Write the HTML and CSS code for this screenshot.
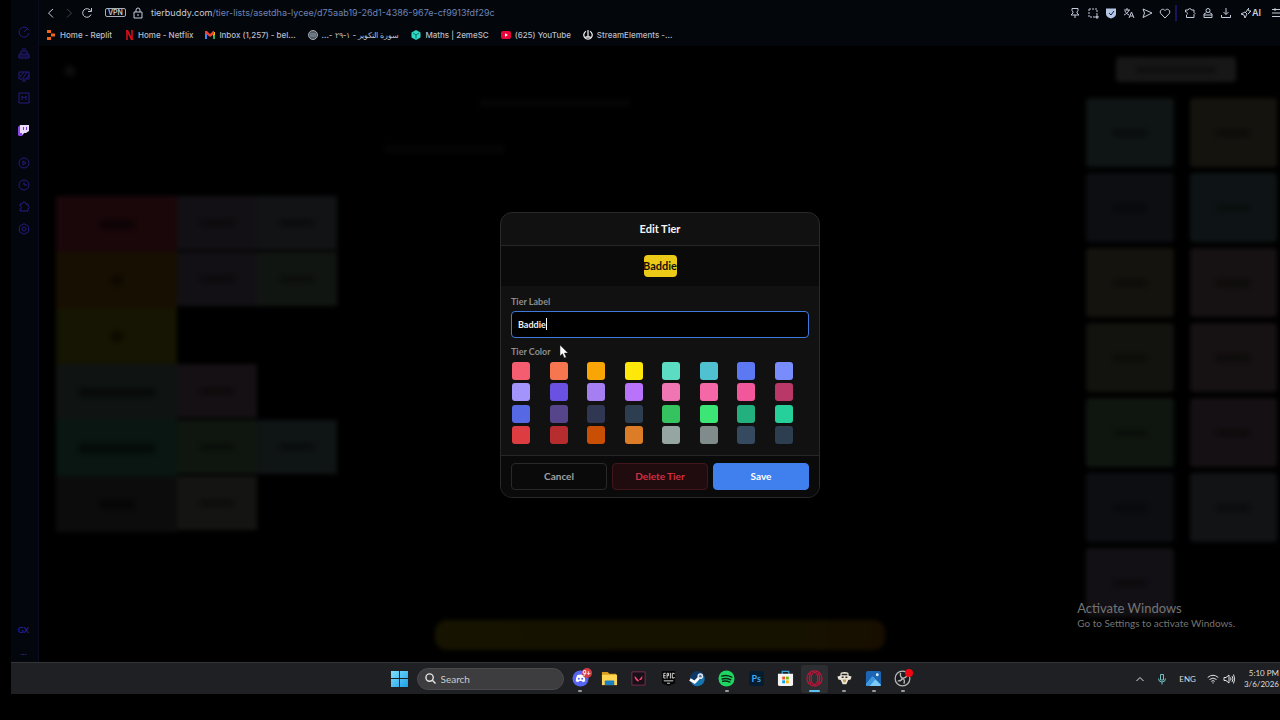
FILE: index.html
```html
<!DOCTYPE html>
<html lang="en">
  <head>
    <meta charset="UTF-8" />
    <meta name="viewport" content="width=device-width, initial-scale=1.0" />
    <title>Edit Tier</title>
    <link rel="stylesheet" href="styles.css">
  </head>
  <body>
    <div class="browser">
      <nav class="sidebar" aria-label="Sidebar">
        <svg class="icon" viewBox="0 0 12 12"><path d="M10.6 4A5 5 0 1 0 11 7M6 6l4-4" /></svg>
        <svg class="icon" viewBox="0 0 12 12"><path d="M1 10V6h10v4zM3 6V3h6v3M4 1h4M1 8h10M4 10v1M8 10v1" /></svg>
        <svg class="icon" viewBox="0 0 12 12"><path d="M1 2h10v7H1zM4 11h4M2 7l4-5M5 8l4-6M8 9l3-4" /></svg>
        <svg class="icon" viewBox="0 0 12 12"><path d="M1 1h10v10H1zM4 8V4l2 2 2-2v4" /></svg>
        <svg class="icon twitch" viewBox="0 0 12 12"><path class="t-back" d="M0 3l2-2v8l-1 3-1-1z" /><path class="t-back" d="M1 8h6l-3 4H1z" /><path class="t-face" d="M2 1h9v6L8 9H6l-2 2V9H2z" /><path class="t-eye" d="M5 3h1v3H5zM8 3h1v3H8z" /></svg>
        <svg class="icon" viewBox="0 0 12 12"><circle cx="6" cy="6" r="5" /><path d="M5 4l3 2-3 2z" /></svg>
        <svg class="icon" viewBox="0 0 12 12"><circle cx="6" cy="6" r="5" /><path d="M6 3v3h3" /></svg>
        <svg class="icon" viewBox="0 0 12 12"><path d="M2 3h2a2 2 0 0 1 4 0h2v2l1.500 1.500L10 8v2H2V8a1.500 1.500 0 0 0 0-3z" /></svg>
        <svg class="icon" viewBox="0 0 12 12"><path d="M6 .7l4.600 2.600v5.400L6 11.300 1.400 8.700V3.300z" /><circle cx="6" cy="6" r="2" /></svg>
        <span class="gx">GX</span>
        <span class="more">...</span>
      </nav>

      <div class="window">
        <header class="chrome">
          <div class="address-bar">
            <button class="tool" aria-label="Back"><svg viewBox="0 0 12 12"><path d="M8 2L3.500 6 8 10.500" /></svg></button>
            <button class="tool off" aria-label="Forward"><svg viewBox="0 0 12 12"><path d="M4 2l4.500 4L4 10.500" /></svg></button>
            <button class="tool" aria-label="Reload"><svg viewBox="0 0 12 12"><path d="M10 7.500A4.300 4.300 0 1 1 9.500 3.500M10.500 1v3.500H7" /></svg></button>
            <span class="vpn">VPN</span>
            <svg class="lock" viewBox="0 0 12 12"><path d="M2 5h8v6H2zM4 5V3a2 2 0 0 1 4 0v2M6 7v2" /></svg>
            <a class="url" href="#"><b>tierbuddy.com</b>/tier-lists/asetdha-lycee/d75aab19-26d1-4386-967e-cf9913fdf29c</a>
            <div class="tools">
              <button class="tool" aria-label="Pin"><svg viewBox="0 0 12 12"><path d="M3 1.500h6v2L8 5v1l2 2H2l2-2V5L3 3.500zM6 8v3" /></svg></button>
              <button class="tool" aria-label="Snapshot"><svg viewBox="0 0 12 12"><path stroke-dasharray="2 1" d="M2 2h8v8H2z" /><path d="M10 8v4M8 10h4" /></svg></button>
              <button class="tool" aria-label="Shield"><svg viewBox="0 0 12 12"><path class="shield" d="M1 1.500h10V7c0 2-2 3.500-5 4.500C3 10.500 1 9 1 7z" /><path class="tick" d="M4 6l2 2 3-4" /></svg></button>
              <button class="tool" aria-label="Translate"><svg viewBox="0 0 12 12"><path d="M1 3h6M4 1v2M6 3C5 6 3 7 1 8M2 4c1 2 2 3 4 4M6 11l2.500-6 2.500 6M7 9h3" /></svg></button>
              <button class="tool" aria-label="Send"><svg viewBox="0 0 12 12"><path d="M2 2l9 4-9 4.500L3.500 6z" /></svg></button>
              <button class="tool" aria-label="Favourite"><svg viewBox="0 0 12 12"><path d="M6 11L1.700 6.500C-.3 3.500 4 .5 6 3.500 8 .5 12.300 3.500 10.300 6.500z" /></svg></button>
              <i class="divider"></i>
              <button class="tool" aria-label="Extensions"><svg viewBox="0 0 12 12"><path d="M1.500 3H4a1.800 1.800 0 0 1 3.500 0H10v2.500l1 1-1 1V10.500H2.500V8a1.700 1.700 0 0 0 0-3H1.500z" /></svg></button>
              <button class="tool" aria-label="Profile"><svg viewBox="0 0 12 12"><circle cx="6" cy="3.500" r="2" /><path d="M4.500 5.500L2 7v3.500h8V7L7.500 5.500M2 8h8" /></svg></button>
              <button class="tool" aria-label="Downloads"><svg viewBox="0 0 12 12"><path d="M6 1v6.500M3.500 5L6 7.500 8.500 5M1.500 8v2.500h9V8" /></svg></button>
              <button class="tool ai" aria-label="AI"><svg viewBox="0 0 12 12"><path d="M1 7l4-2 2 2-2 4-1-3zM6 5l2-3 1 2 2 0-3 3M8 1l1 1" /></svg>AI</button>
              <button class="tool" aria-label="Menu"><svg viewBox="0 0 12 12"><path d="M1 2.500h11M1 6h11M1 9.500h11M4 1v3" /></svg></button>
            </div>
          </div>
          <div class="bookmarks">
            <a href="#"><svg class="fav" viewBox="0 0 10 10"><path fill="#f2641c" d="M1 0h4v3H1zM5 3.500h4v3H5zM1 7h4v3H1z" /></svg>Home - Replit</a>
            <a href="#"><svg class="fav" viewBox="0 0 10 10"><path fill="#a80c16" d="M2 0h2v10H2zM7 0h2v10H7z" /><path fill="#e50914" d="M2 0h2l5 10H7z" /></svg>Home - Netflix</a>
            <a href="#"><svg class="fav" viewBox="0 0 10 10"><path fill="#4285f4" d="M0 2h2v7H0z" /><path fill="#34a853" d="M8 4h2v5H8z" /><path fill="#fbbc04" d="M8 2h2v3L8 6z" /><path fill="#ea4335" d="M0 1h2l3 3 3-3h1v3L5 7 0 3z" /></svg>Inbox (1,257) - bel...</a>
            <a href="#"><svg class="fav" viewBox="0 0 10 10"><circle cx="5" cy="5" r="4.500" fill="#4c5964" stroke="#a4a9ad" /><path d="M2 4h6M2 6h6" stroke="#8b98a5" /></svg><span dir="rtl">سورة التكوير - ١-٢٩ -...</span></a>
            <a href="#"><svg class="fav" viewBox="0 0 10 10"><path fill="#2fd9c4" d="M5 0l4.500 2.500v5L5 10 .5 7.500v-5z" /><path fill="none" stroke="#0c6d68" d="M2 3l3 2 3-2M5 5v3.500" /></svg>Maths | 2emeSC</a>
            <a href="#"><svg class="fav" viewBox="0 0 10 10"><rect y="1" width="10" height="8" rx="2" fill="#e6063a" /><path fill="#fff" d="M4 3.300L7 5 4 6.700z" /></svg>(625) YouTube</a>
            <a href="#"><svg class="fav" viewBox="0 0 10 10"><path fill="none" stroke="#e8e8e8" stroke-width="1.300" d="M3 1.200a4.200 4.200 0 1 0 4 0M5 0v7M2.500 7h5" /></svg>StreamElements -...</a>
          </div>
        </header>

        <div class="page">
          <div class="backdrop" aria-hidden="true">
            <div class="board">
              <div class="avatar"></div>
              <div class="smudge title"></div>
              <div class="smudge subtitle"></div>
              <div class="tiers">
                <div class="tier"><div class="label red"><i></i></div><div class="card plum"><i></i></div><div class="card slate"><i></i></div></div>
                <div class="tier"><div class="label orange"><i class="dot"></i></div><div class="card plum"><i></i></div><div class="card moss"><i></i></div></div>
                <div class="tier"><div class="label yellow"><i class="dot"></i></div></div>
                <div class="tier"><div class="label sage"><i class="wide"></i></div><div class="card rose"><i></i></div></div>
                <div class="tier"><div class="label green"><i class="wide"></i></div><div class="card grass"><i></i></div><div class="card teal"><i></i></div></div>
                <div class="tier"><div class="label grey"><i></i></div><div class="card sand"><i></i></div></div>
              </div>
              <div class="bar"></div>
            </div>
            <div class="pool">
              <div class="pool-btn"><i></i></div>
              <div class="pool-grid">
                <div class="card teal"><i></i></div><div class="card gold"><i></i></div>
                <div class="card navy"><i></i></div><div class="card cyan"><i></i></div>
                <div class="card gold"><i></i></div><div class="card blush"><i></i></div>
                <div class="card olive"><i></i></div><div class="card blush"><i></i></div>
                <div class="card grass"><i></i></div><div class="card rose"><i></i></div>
                <div class="card navy"><i></i></div><div class="card slate"><i></i></div>
                <div class="card plum"><i></i></div>
              </div>
            </div>
          </div>

          <div class="overlay">
            <form class="modal" role="dialog" aria-labelledby="modal-title">
              <h2 id="modal-title">Edit Tier</h2>
              <div class="preview"><span>Baddie</span></div>
              <div class="fields">
                <label for="tier-label">Tier Label</label>
                <div class="text-field">
                  <input type="text" id="tier-label" value="Baddie" />
                  <i class="caret"></i>
                </div>
                <p id="color-label">Tier Color</p>
                <div class="swatches" role="radiogroup" aria-labelledby="color-label"></div>
              </div>
              <div class="actions">
                <button type="button" class="cancel">Cancel</button>
                <button type="button" class="delete">Delete Tier</button>
                <button type="button" class="save">Save</button>
              </div>
              <svg class="cursor" viewBox="0 0 10 14"><path fill="#fff" stroke="#222" stroke-width=".5" d="M1 0v11l2.500-2.300L5.300 13l1.900-.8-1.800-4.100H9z" /></svg>
            </form>
          </div>

          <div class="activate">
            <strong>Activate Windows</strong>
            <span>Go to Settings to activate Windows.</span>
          </div>
        </div>
      </div>
    </div>

    <footer class="taskbar">
      <div class="launcher">
        <svg class="start" viewBox="0 0 17 17"><defs><linearGradient id="win" x2="1" y2="1"><stop stop-color="#7fe0fb" /><stop offset="1" stop-color="#1b9fe8" /></linearGradient></defs><path fill="url(#win)" d="M0 1h8v7H0zM9 1h8v7H9zM0 9h8v8H0zM9 9h8v8H9z" /></svg>
        <label class="search">
          <svg viewBox="0 0 12 12"><circle cx="5" cy="5" r="4" /><path d="M8 8l3.500 3.500" /></svg>
          <input type="text" placeholder="Search" aria-label="Search" />
        </label>
        <div class="apps">
          <span class="app open"><svg viewBox="0 0 18 18"><circle cx="9" cy="9" r="8.500" fill="#5865f2" /><path fill="#fff" d="M5.500 5.500Q9 4 12.500 5.500 14.500 9 14 12l-2.500 1-1-1.300h-3l-1 1.300L4 12q-.5-3 1.500-6.500z" /><circle cx="7.200" cy="9.300" r="1.100" fill="#5865f2" /><circle cx="10.800" cy="9.300" r="1.100" fill="#5865f2" /></svg><b class="badge">9+</b></span>
          <span class="app"><svg viewBox="0 0 18 18"><path fill="#d89b1c" d="M1 2h6l2 2h7v4H1z" /><path fill="#ffd553" d="M1 5h16v11H1z" /><path fill="#1b7fc4" d="M4 16v-4q0-1 1-1h8q1 0 1 1v4z" /></svg></span>
          <span class="app"><svg viewBox="0 0 18 18"><path fill="#171019" stroke="#7c2f4b" d="M2 2h14v14H2z" /><path fill="#f0476a" d="M5 6l5 6H7.500L5 9zM13 6v3l-1.300 1.500H9.500z" /></svg></span>
          <span class="app"><svg viewBox="0 0 18 18"><path fill="#060606" d="M2 1h14v13l-7 3-7-3z" /><path fill="none" stroke="#ddd" d="M6 3.500H4v5h2M4 6h2M7.500 9V3.500h1.500V6H7.500M11 3v6M15 4.500v-1h-2v5h2v-1M4 11.500h10M7.500 14h3" /></svg></span>
          <span class="app"><svg viewBox="0 0 18 18"><circle cx="9" cy="9" r="8" fill="#103866" /><path fill="#1675ad" d="M2 13q7 1 14-7 2 9-6 11-5 1-8-4z" /><path fill="none" stroke="#fff" stroke-width="3" d="M1 10l5 3 6-6" /><circle cx="12" cy="6.500" r="3" fill="#dbe4ee" /><circle cx="12" cy="6.500" r="1.300" fill="#497093" /></svg></span>
          <span class="app open"><svg viewBox="0 0 18 18"><circle cx="9" cy="9" r="8.500" fill="#1ed760" /><path fill="none" stroke="#0c2615" stroke-width="1.600" stroke-linecap="round" d="M4 6.500q5.500-1.500 10.500 1M4.500 9.500q4.500-1.200 9 .8M5 12q4-.8 7.500.8" /></svg></span>
          <span class="app ps">Ps</span>
          <span class="app"><svg viewBox="0 0 18 18"><path fill="none" stroke="#36a3dc" stroke-width="1.300" d="M5.500 5V1.500h7V5" /><path fill="#f3f3f3" d="M1 4h16v11q0 2-2 2H3q-2 0-2-2z" /><path fill="#f25022" d="M5.500 7h3v3h-3z" /><path fill="#7fba00" d="M9.500 7h3v3h-3z" /><path fill="#00a4ef" d="M5.500 11h3v3h-3z" /><path fill="#ffb900" d="M9.500 11h3v3h-3z" /></svg></span>
          <span class="app open current"><svg viewBox="0 0 18 18"><g fill="none" stroke="#c5133a" stroke-width="1.300"><circle cx="9" cy="9" r="8" /><ellipse cx="9" cy="9" rx="3.500" ry="6.500" /><path d="M5 3.500q-3 5.500 0 11M13 3.500q3 5.500 0 11" /></g></svg></span>
          <span class="app open"><svg viewBox="0 0 18 18"><path fill="#e9e4d8" d="M5 3q4-2 8 0l.5 3 3 1-1 3-2.500.5-2 4.500H7l-2-4.500L2.500 10l-1-3 3-1z" /><path fill="#28231f" d="M6 4h6v1.500H6zM6 7h2v1.500H6zM10 7h2v1.500h-2z" /><path fill="#c49a55" d="M7 10h4l-1 3H8z" /></svg></span>
          <span class="app open"><svg viewBox="0 0 18 18"><rect x="1" y="1" width="16" height="16" rx="2" fill="#1c65b4" /><path fill="#7dccf7" d="M1 15l7-8 9 9-1 1H2z" /><path fill="#3c99df" d="M1 15l7-8 3 3-6 7H2z" /><circle cx="13" cy="5" r="1.500" fill="#d8f1ff" /></svg></span>
          <span class="app open"><svg viewBox="0 0 18 18"><circle cx="9" cy="9" r="7.800" fill="#1b1c1f" stroke="#b8b8b8" stroke-width="1.300" /><path fill="none" stroke="#b8b8b8" stroke-width="1.400" d="M7 3q-1 4 2 5.500Q12 9 14 6M9 8.500Q8 12 4 11.500M9 8.500q3 2 1.500 6" /></svg><i class="rec"></i></span>
        </div>
      </div>
      <div class="tray">
        <svg viewBox="0 0 12 12"><path d="M2.500 8L6 4.500 9.500 8" /></svg>
        <svg class="mic" viewBox="0 0 12 12"><path d="M4.500 1.500h3V7h-3zM2.500 5.500Q2.500 9 6 9t3.500-3.500M6 9v2.500" /></svg>
        <span class="lang">ENG</span>
        <svg viewBox="0 0 12 12"><path d="M.7 4.500q5.300-4.500 10.600 0M2.500 6.500Q6 3.700 9.500 6.500M4.300 8.300Q6 7 7.700 8.300M6 9.300v1.200" /></svg>
        <svg viewBox="0 0 12 12"><path d="M1 4.500h2L6 2v8L3 7.500H1zM7.500 4.500q1 1.500 0 3M9 3q2 3 0 6M10.500 1.500q2.500 4.500 0 9" /></svg>
        <div class="clock">5:10 PM<br />3/6/2026</div>
      </div>
    </footer>

    <script>
      var palette = [
        "#f35d6f", "#f67650", "#f9a506", "#fde80a", "#5bdcc3", "#4fc1d1", "#5c78f3", "#788cfb",
        "#a394fb", "#6b51e2", "#a57ff2", "#b973fa", "#ef76b3", "#f567a6", "#f2579b", "#b93868",
        "#5668e3", "#57458c", "#2f3752", "#2d3e50", "#34c35f", "#3be677", "#22b07e", "#26d09b",
        "#dd3c40", "#b72c2f", "#c84f04", "#dd7c26", "#95a5a2", "#7f8c8b", "#35495f", "#2c3e50",
      ];
      var swatches = document.getElementsByClassName("swatches")[0];

      for (var i = 0; i < palette.length; i++) {
        var radio = document.createElement("input");
        radio.type = "radio";
        radio.name = "tier-color";
        radio.value = palette[i];
        radio.setAttribute("aria-label", palette[i]);
        radio.style.backgroundColor = palette[i];
        swatches.appendChild(radio);
      }
    </script>
  </body>
</html>
```

FILE: styles.css
```css
* {
  box-sizing: border-box;
}
body {
  display: flex;
  flex-direction: column;
  height: 100vh;
  margin: 0;
  padding: 0 0 26px 11px;
  overflow: hidden;
  background-color: #000;
  color: #ddd;
  font-family: Lato, "Open Sans", sans-serif;
}
button,
input {
  font-family: inherit;
}
svg {
  flex: none;
}
.browser {
  display: flex;
  flex: 1;
  min-height: 0;
}

/* sidebar */
.sidebar {
  display: flex;
  flex-direction: column;
  align-items: center;
  gap: 10px;
  width: 28px;
  padding: 26px 2px 4px 0;
  background-color: #03060c;
  border-right: 1px solid #0b0c22;
  color: #3a26b0;
  font-size: 8px;
  line-height: 12px;
}
.sidebar .icon {
  width: 12px;
  height: 12px;
  fill: none;
  stroke: #281a80;
}
.sidebar .twitch {
  margin: 10px 0 11px;
  stroke: none;
}
.t-back {
  fill: #8b45e8;
}
.t-face {
  fill: #eadcff;
}
.t-eye {
  fill: #7a35dd;
}
.gx {
  margin-top: auto;
}
.more {
  font-weight: 700;
}

/* toolbar and bookmarks */
.window {
  display: flex;
  flex: 1;
  flex-direction: column;
  min-width: 0;
}
.chrome {
  height: 46px;
  background-color: #03070c;
  font-family: Inter, sans-serif;
  white-space: nowrap;
}
.address-bar {
  display: flex;
  align-items: center;
  height: 25px;
  padding-left: 6px;
  gap: 6px;
}
.tool {
  display: flex;
  flex: none;
  align-items: center;
  padding: 0;
  border: 0;
  background: none;
  color: #c4cbd8;
  font-size: 9px;
  font-weight: 600;
}
.tool svg,
.lock {
  width: 12px;
  height: 12px;
  fill: none;
  stroke: #c4cbd8;
}
.tool.off {
  opacity: 0.3;
}
.tool .shield {
  fill: #b3c6e6;
  stroke: none;
}
.tool .tick {
  stroke: #10203a;
}
.vpn {
  margin: 0 0 0 6px;
  padding: 0 2px;
  border: 1px solid #a9b0bc;
  border-radius: 2px;
  color: #c4cbd8;
  font-size: 7px;
  font-weight: 600;
  line-height: 7px;
}
.url {
  margin-left: 1px;
  color: #6d83b4;
  font-size: 9px;
  text-decoration: none;
}
.url b {
  color: #c4cbd8;
  font-weight: 400;
}
.tools {
  display: flex;
  align-items: center;
  gap: 6px;
  margin-left: auto;
  margin-right: -3px;
}
.divider {
  width: 2px;
  height: 16px;
  margin: 0 1px 0 -2px;
  background-color: #1d125c;
}
.ai {
  margin: 0 4px 0 2px;
}
.bookmarks {
  display: flex;
  gap: 12px;
  padding-left: 7px;
}
.bookmarks a {
  display: flex;
  align-items: center;
  gap: 4px;
  height: 19px;
  color: #b9bdc6;
  font-size: 8px;
  font-weight: 500;
  text-decoration: none;
}
.fav {
  width: 10px;
  height: 10px;
}

/* blurred page behind the dialog */
.page {
  position: relative;
  flex: 1;
  min-height: 0;
  overflow: hidden;
}
.backdrop {
  display: grid;
  grid-template-columns: 1fr 210px;
  height: 100%;
  filter: blur(2px);
}
.backdrop i {
  width: 34px;
  height: 6px;
  background-color: #000;
  opacity: 0.4;
  filter: blur(2px);
}
.backdrop .label i {
  height: 9px;
  opacity: 0.5;
}
.backdrop i.dot {
  width: 10px;
}
.backdrop i.wide {
  width: 76px;
}
.board {
  display: flex;
  flex-direction: column;
  padding: 19px 16px 12px 17px;
}
.avatar {
  width: 12px;
  height: 12px;
  margin-left: 8px;
  border-radius: 50%;
  background-color: #0d0b0b;
}
.smudge {
  align-self: center;
  height: 8px;
  background-color: #050505;
}
.title {
  width: 150px;
  margin-top: 22px;
}
.subtitle {
  width: 120px;
  margin: 38px 220px 43px 0;
}
.tier {
  display: flex;
  height: 56px;
}
.label,
.card,
.pool-btn {
  display: flex;
  align-items: center;
  justify-content: center;
}
.label {
  width: 121px;
}
.card {
  width: 80px;
  height: 54px;
}
.red { background-color: #1a070a; }
.orange { background-color: #170f02; }
.yellow { background-color: #161402; }
.sage { background-color: #0f1412; }
.green { background-color: #091611; }
.grey { background-color: #0c0c0c; }
.plum { background-color: #121014; }
.slate { background-color: #111314; }
.moss { background-color: #111511; }
.rose { background-color: #151013; }
.grass { background-color: #0f160f; }
.teal { background-color: #0f1414; }
.sand { background-color: #141412; }
.gold { background-color: #15130e; }
.navy { background-color: #0c0e12; }
.cyan { background-color: #0e1415; }
.blush { background-color: #161112; }
.olive { background-color: #12130e; }
.bar {
  align-self: center;
  width: 450px;
  height: 30px;
  margin-top: auto;
  margin-left: 210px;
  border-radius: 12px;
  background: linear-gradient(90deg, #161300, #161200 80%, #180e00);
}
.pool {
  padding: 11px 3px 0 16px;
}
.pool-btn {
  width: 120px;
  height: 25px;
  margin-left: 30px;
  border-radius: 4px;
  background-color: #171717;
}
.pool-btn i {
  width: 80px;
}
.pool-grid {
  display: grid;
  grid-template-columns: 1fr 1fr;
  gap: 6px 16px;
  margin-top: 16px;
}
.pool-grid .card {
  width: auto;
  height: 69px;
  border-radius: 4px;
}

/* dialog */
.overlay {
  position: absolute;
  inset: 0;
  display: flex;
  align-items: center;
  justify-content: center;
  padding: 1px 0 0 1px;
}
.modal {
  position: relative;
  width: 320px;
  border: 1px solid #292929;
  border-radius: 12px;
  background-color: #111;
}
.modal h2 {
  margin: 0;
  border-bottom: 1px solid #262626;
  color: #f5f5f5;
  font-size: 11px;
  font-weight: 700;
  line-height: 32px;
  text-align: center;
}
.preview {
  display: flex;
  align-items: center;
  justify-content: center;
  height: 40px;
  background-color: #0a0a0a;
}
.preview span {
  display: flex;
  justify-content: center;
  width: 33px;
  border-radius: 4px;
  background-color: #eccb18;
  color: #14120a;
  font-size: 11px;
  font-weight: 700;
  line-height: 22px;
}
.fields {
  padding: 8px 10px 10px;
}
.fields label,
.fields p {
  display: block;
  margin: 0;
  color: #8d8d8d;
  font-size: 9px;
  font-weight: 700;
  line-height: 16px;
}
.text-field {
  position: relative;
  margin: 1px 0 6px;
}
.text-field input {
  display: block;
  width: 100%;
  height: 27px;
  padding: 0 6px;
  border: 1px solid #4079dc;
  border-radius: 4px;
  outline: none;
  background-color: #000;
  color: #f0f0f0;
  font-size: 9px;
  font-weight: 700;
}
.caret {
  position: absolute;
  top: 7px;
  left: 35px;
  width: 1px;
  height: 12px;
  background-color: #fff;
}
.swatches {
  display: grid;
  grid-template-columns: repeat(8, 1fr);
  align-content: space-between;
  height: 83px;
  margin: 2px -3px 0 0;
  padding-left: 1px;
}
.swatches input {
  width: 18px;
  height: 18px;
  margin: 0;
  border-radius: 3px;
  appearance: none;
}
.actions {
  display: grid;
  grid-template-columns: repeat(3, 1fr);
  gap: 5px;
  padding: 7px 10px;
  border-top: 1px solid #262626;
  border-radius: 0 0 11px 11px;
  background-color: #0a0a0a;
}
.actions button {
  height: 27px;
  padding: 0;
  border: 1px solid #292929;
  border-radius: 4px;
  background-color: #0a0a0a;
  color: #a0a0a0;
  font-size: 10px;
  font-weight: 700;
}
.actions .delete {
  border-color: #42161c;
  background-color: #200c0f;
  color: #d22f42;
}
.actions .save {
  border-color: #4080ee;
  background-color: #4080ee;
  color: #fff;
}
.cursor {
  position: absolute;
  top: 132px;
  left: 58px;
  width: 10px;
  height: 14px;
}
.activate {
  position: absolute;
  right: 45px;
  bottom: 32px;
  display: flex;
  flex-direction: column;
  color: #747474;
  font-size: 10px;
  line-height: 14px;
}
.activate strong {
  font-size: 13px;
  font-weight: 400;
  line-height: 16px;
}

/* taskbar */
.taskbar {
  display: grid;
  grid-template-columns: 1fr auto 1fr;
  align-items: center;
  height: 32px;
  padding-left: 16px;
  border-top: 1px solid #333537;
  background-color: #1e2023;
}
.launcher {
  display: flex;
  grid-column: 2;
  align-items: center;
}
.start {
  width: 17px;
  height: 17px;
}
.search {
  display: flex;
  align-items: center;
  gap: 5px;
  width: 147px;
  height: 22px;
  margin: 0 3px 0 9px;
  padding: 0 7px;
  border: 1px solid #4a4a4c;
  border-radius: 11px;
  background-color: #3d3d3f;
}
.search svg {
  width: 11px;
  height: 11px;
  fill: none;
  stroke: #e6e6e6;
  stroke-width: 1.5;
}
.search input {
  width: 100%;
  padding: 0;
  border: 0;
  background: none;
  font-size: 10px;
}
.search input::placeholder {
  color: #ccc;
}
.apps {
  display: flex;
  justify-content: space-between;
  width: 350px;
}
.app {
  position: relative;
  display: flex;
  align-items: center;
  justify-content: center;
  width: 27px;
  height: 28px;
  border-radius: 3px;
}
.app svg {
  width: 17px;
  height: 17px;
}
.app.open::after {
  content: "";
  position: absolute;
  bottom: 1px;
  width: 4px;
  height: 2px;
  border-radius: 1px;
  background-color: #9b9b9b;
}
.app.current {
  background-color: #2c2e31;
}
.app.current::after {
  width: 11px;
  background-color: #5fc1f2;
}
.badge {
  position: absolute;
  top: 3px;
  right: 2px;
  width: 10px;
  border-radius: 5px;
  background-color: #d63b48;
  color: #fff;
  font-size: 7px;
  line-height: 10px;
  text-align: center;
}
.ps {
  color: #42a8f5;
  font-size: 9px;
  font-weight: 700;
  z-index: 0;
}
.ps::before {
  content: "";
  position: absolute;
  width: 15px;
  height: 15px;
  border-radius: 3px;
  background-color: #061c30;
  z-index: -1;
}
.rec {
  position: absolute;
  top: 4px;
  right: 3px;
  width: 8px;
  height: 8px;
  border-radius: 50%;
  background-color: #f00610;
}
.tray {
  display: flex;
  grid-column: 3;
  align-items: center;
  justify-content: flex-end;
  padding-right: 1px;
  font-size: 8px;
}
.tray svg {
  width: 12px;
  height: 12px;
  margin-right: 4px;
  fill: none;
  stroke: #e0e0e0;
}
.tray .mic {
  margin: 0 11px 0 6px;
  stroke: #6fc0c0;
}
.lang {
  margin-right: 11px;
}
.clock {
  margin-left: 5px;
  line-height: 11px;
  text-align: right;
  white-space: nowrap;
}
```
